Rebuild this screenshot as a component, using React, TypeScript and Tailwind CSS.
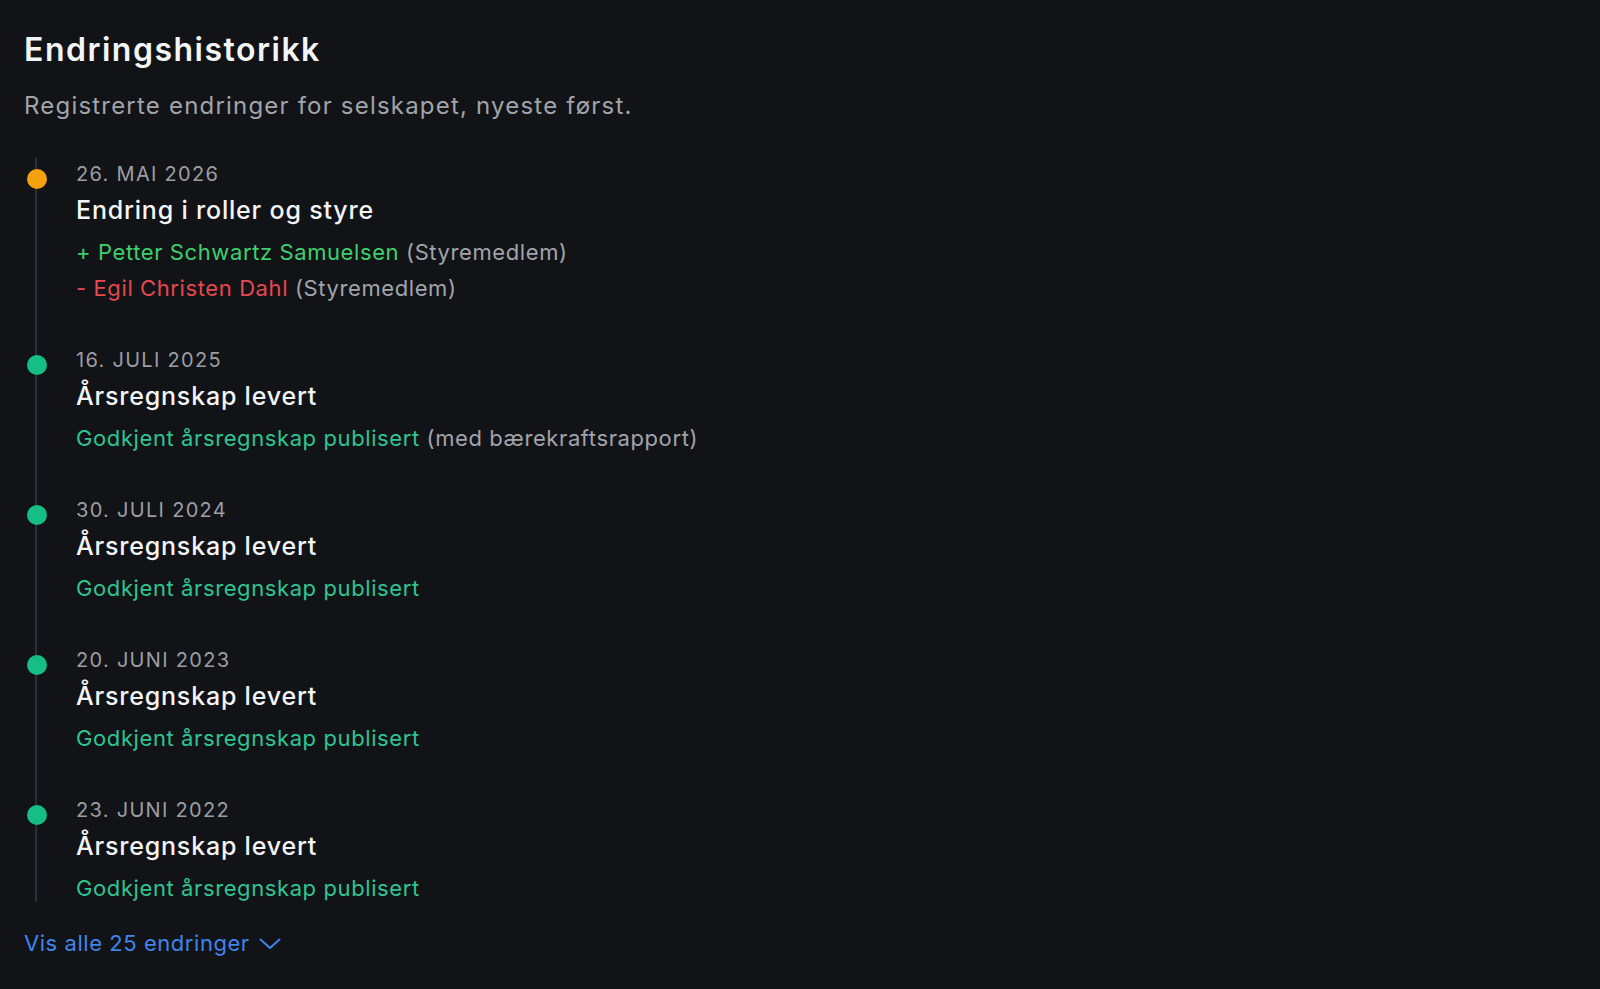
import React from 'react';

type Change = { sign: '+' | '-'; name: string; role: string };

type Entry = {
  date: string;
  title: string;
  kind: 'roles' | 'accounts';
  changes?: Change[];
  note?: string;
};

const entries: Entry[] = [
  {
    date: '26. Mai 2026',
    title: 'Endring i roller og styre',
    kind: 'roles',
    changes: [
      { sign: '+', name: 'Petter Schwartz Samuelsen', role: 'Styremedlem' },
      { sign: '-', name: 'Egil Christen Dahl', role: 'Styremedlem' },
    ],
  },
  { date: '16. Juli 2025', title: 'Årsregnskap levert', kind: 'accounts', note: 'med bærekraftsrapport' },
  { date: '30. Juli 2024', title: 'Årsregnskap levert', kind: 'accounts' },
  { date: '20. Juni 2023', title: 'Årsregnskap levert', kind: 'accounts' },
  { date: '23. Juni 2022', title: 'Årsregnskap levert', kind: 'accounts' },
];

const ChevronDown = () => (
  <svg width="22" height="12" viewBox="0 0 22 12" fill="none" className="mt-0.5">
    <path d="M1.5 1.5 L11 10 L20.5 1.5" stroke="currentColor" strokeWidth="2" strokeLinecap="round" strokeLinejoin="round" />
  </svg>
);

export default function App() {
  return (
    <div
      className="min-h-screen bg-[#121317] px-6 pt-[26px] text-white"
      style={{ fontFamily: 'Inter, "Noto Sans", sans-serif' }}
    >
      {/* Header */}
      <h1 className="text-[32px] font-semibold leading-[48px] tracking-[1.5px] text-[#f3f4f6]">
        Endringshistorikk
      </h1>
      <p className="mt-4 text-[24px] leading-[32px] tracking-[1.2px] text-[#a1a4ab]">
        Registrerte endringer for selskapet, nyeste først.
      </p>

      {/* Timeline */}
      <div className="relative mt-[40px]">
        <div className="absolute left-[11px] top-[-4px] bottom-[4px] w-[2px] bg-[#2c2f35]" />
        {entries.map((e, i) => (
          <div key={i} className={`relative flex ${i < entries.length - 1 ? 'pb-[42px]' : ''}`}>
            <div className="w-[52px] shrink-0 pt-[7px] pl-[3px]">
              <div
                className={`h-[20px] w-[20px] rounded-full ${
                  e.kind === 'roles' ? 'bg-[#f5a00f]' : 'bg-[#14be84]'
                }`}
              />
            </div>
            <div>
              <div className="text-[20px] uppercase leading-[24px] tracking-[1.3px] text-[#9b9ea5]">
                {e.date}
              </div>
              <div className="mt-1.5 text-[25px] font-medium leading-[36px] tracking-[0.8px] text-[#f3f4f6]">
                {e.title}
              </div>
              <div className="mt-1.5 text-[22px] leading-[36px] tracking-[0.6px]">
                {e.kind === 'roles' &&
                  e.changes?.map((c, j) => (
                    <div key={j}>
                      <span className={c.sign === '+' ? 'text-[#3fcf6c]' : 'text-[#e5484d]'}>
                        {c.sign} {c.name}
                      </span>{' '}
                      <span className="text-[#a1a4ab]">({c.role})</span>
                    </div>
                  ))}
                {e.kind === 'accounts' && (
                  <div>
                    <span className="text-[#2fc491]">Godkjent årsregnskap publisert</span>
                    {e.note && <span className="text-[#a1a4ab]"> ({e.note})</span>}
                  </div>
                )}
              </div>
            </div>
          </div>
        ))}
      </div>

      {/* Show all */}
      <button className="mt-[21px] flex items-center gap-[9px] text-[22px] leading-[32px] tracking-[0.55px] text-[#3f85ec]">
        Vis alle 25 endringer
        <ChevronDown />
      </button>
    </div>
  );
}
